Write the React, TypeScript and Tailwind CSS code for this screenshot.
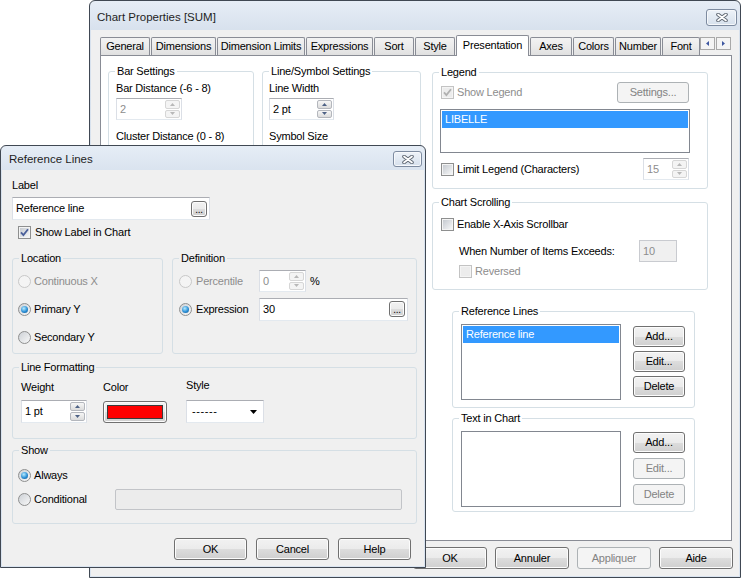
import React from 'react';

type P = { children?: React.ReactNode; className?: string };

const BTN = 'border-[#707070] bg-[linear-gradient(#f2f2f2,#ebebeb_50%,#dddddd_50%,#cfcfcf)] shadow-[inset_0_0_0_1px_#fcfcfc]';
const BTN_OFF = 'border-[#adb2b5] bg-[#f4f4f4] text-[#838383]';
const GRAY = 'text-[#8d8d8d]';
const FIELD = 'border border-[#abadb3] border-x-[#dbdfe6] border-b-[#e3e9ef] bg-white';

function Button({ children, className = '', disabled = false }: P & { disabled?: boolean }) {
  return (
    <div className={`flex shrink-0 items-center justify-center rounded-[3px] border ${disabled ? BTN_OFF : BTN} ${className}`}>
      {children}
    </div>
  );
}

function Group({ title, className = '', children, bg = 'bg-white' }: P & { title: string; bg?: string }) {
  return (
    <div className={`relative shrink-0 rounded-[3px] border border-[#d5dfe5] ${className}`}>
      <span className={`absolute -top-[7px] left-[6px] px-[2px] ${bg}`}>{title}</span>
      {children}
    </div>
  );
}

function Check({ checked = false, disabled = false }) {
  return (
    <span className={`relative h-[13px] w-[13px] shrink-0 border p-[1px] ${disabled ? 'border-[#c3c3c3] bg-[#f4f4f4]' : 'border-[#8e8f8f] bg-[#f4f4f4]'}`}>
      <span className={`block h-full w-full ${disabled ? 'bg-[#ececec]' : 'bg-[linear-gradient(135deg,#c6cad0,#f5f6f7)]'}`} />
      {checked && (
        <svg className="absolute left-0 top-0" width="11" height="11" viewBox="0 0 11 11">
          <path d="M2 5.3 L4.4 8 L9 2.2" fill="none" stroke={disabled ? '#b0b0b0' : '#4a5f9a'} strokeWidth="1.8" />
        </svg>
      )}
    </span>
  );
}

function Radio({ checked = false, disabled = false }) {
  return (
    <span className={`flex h-[13px] w-[13px] shrink-0 items-center justify-center rounded-full border ${disabled ? 'border-[#c8c8c8] bg-[#f4f4f4]' : 'border-[#8e8f8f] bg-[linear-gradient(135deg,#cdd1d6,#f8f8f8)]'}`}>
      {checked && <span className="h-[7px] w-[7px] rounded-full bg-[radial-gradient(circle_at_40%_35%,#b8ecff,#2b8fd6_55%,#0f4f86)]" />}
    </span>
  );
}

function Arrow({ up, color }: { up: boolean; color: string }) {
  return (
    <svg width="5" height="3" viewBox="0 0 5 3">
      <path d={up ? 'M0 3 L2.5 0 L5 3Z' : 'M0 0 L2.5 3 L5 0Z'} fill={color} />
    </svg>
  );
}

function Spin({ value, disabled = false, className = '' }: { value: string; disabled?: boolean; className?: string }) {
  return (
    <div className={`flex h-[22px] shrink-0 ${FIELD} ${className}`}>
      <span className={`flex flex-1 items-center pl-[3px] ${disabled ? GRAY : ''}`}>{value}</span>
      <div className="flex w-[16px] flex-col gap-[1px] py-[1px] pr-[1px]">
        {[true, false].map((up) => (
          <div
            key={String(up)}
            className={`flex flex-1 items-center justify-center rounded-[2px] border ${disabled ? 'border-[#d6d6d6] bg-[#f4f4f4]' : 'border-[#b4b7bd] bg-[linear-gradient(#f6f6f6,#dcdcdc)]'}`}
          >
            <Arrow up={up} color={disabled ? '#b8b8b8' : '#4d6185'} />
          </div>
        ))}
      </div>
    </div>
  );
}

function ListBox({ items = [], className = '' }: { items?: string[]; className?: string }) {
  return (
    <div className={`shrink-0 border border-[#828790] bg-white p-[1px] ${className}`}>
      {items.map((t) => (
        <div key={t} className="h-[17px] bg-[#3399ff] pl-[3px] leading-[17px] text-white">
          {t}
        </div>
      ))}
    </div>
  );
}

function Dots() {
  return <Button className="h-[16px] w-[16px] items-end pb-[1px] text-[10px] leading-[10px]">...</Button>;
}

function CloseBtn({ className = '' }) {
  return (
    <div className={`flex shrink-0 items-center justify-center rounded-[3px] border border-[#7d8ba0] bg-[linear-gradient(#eef3f9,#d6e0ec)] shadow-[inset_0_0_0_1px_#f6f8fb] ${className}`}>
      <svg width="12" height="9" viewBox="0 0 12 9">
        <path d="M2 1.5 L10 7.5 M10 1.5 L2 7.5" stroke="#5e6773" strokeWidth="3.6" strokeLinecap="round" />
        <path d="M2 1.5 L10 7.5 M10 1.5 L2 7.5" stroke="#ffffff" strokeWidth="1.7" strokeLinecap="round" />
      </svg>
    </div>
  );
}

const TABS: [string, number][] = [
  ['General', 50],
  ['Dimensions', 65],
  ['Dimension Limits', 88],
  ['Expressions', 67],
  ['Sort', 40],
  ['Style', 40],
  ['Presentation', 73],
  ['Axes', 42],
  ['Colors', 41],
  ['Number', 46],
  ['Font', 38],
];

const WINDOW = 'flex flex-col rounded-t-[6px] border border-[#404853] bg-[linear-gradient(#e6edf6,#d7e1ed_30px,#dae4f0)] px-[1px] pb-[1px]';

function ChartProperties() {
  return (
    <div className={`absolute left-[89px] top-0 h-[578px] w-[652px] ${WINDOW}`}>
      <div className="flex h-[29px] shrink-0 items-center pl-[6px] pr-[2px] pt-[3px]">
        <span className="text-[11.5px] tracking-normal text-[#1e1e1e]">Chart Properties [SUM]</span>
        <CloseBtn className="ml-auto h-[17px] w-[31px]" />
      </div>
      <div className="flex flex-1 flex-col bg-[#f0f0f0] pl-[9px] pr-[6px] pt-[5px]">
        {/* tab strip */}
        <div className="flex h-[21px] shrink-0 items-end">
          <div className="flex h-full w-[600px] items-end gap-[1px] overflow-hidden">
            {TABS.map(([name, w]) =>
              name === 'Presentation' ? (
                <div
                  key={name}
                  style={{ width: w }}
                  className="relative z-10 flex h-[21px] shrink-0 items-start justify-center rounded-t-[2px] border border-b-0 border-[#898c95] bg-white pt-[3px]"
                >
                  {name}
                </div>
              ) : (
                <div
                  key={name}
                  style={{ width: w }}
                  className="mb-[1px] flex h-[18px] shrink-0 items-center justify-center rounded-t-[2px] border border-b-0 border-[#898c95] bg-[linear-gradient(#f3f3f3,#ebebeb_50%,#e0e0e0)]"
                >
                  {name}
                </div>
              )
            )}
          </div>
          <div className="mt-[2px] flex gap-[1px] self-start">
            <div className="flex h-[13px] w-[15px] items-center justify-center border border-[#a9a9a9] bg-[#f4f4f4]">
              <svg width="3" height="5" viewBox="0 0 3 5"><path d="M3 0 L0 2.5 L3 5Z" fill="#3d56a0" /></svg>
            </div>
            <div className="flex h-[13px] w-[15px] items-center justify-center border border-[#a9a9a9] bg-[#f4f4f4]">
              <svg width="3" height="5" viewBox="0 0 3 5"><path d="M0 0 L3 2.5 L0 5Z" fill="#3d56a0" /></svg>
            </div>
          </div>
        </div>

        {/* panel */}
        <div className="-mt-[1px] flex h-[486px] w-[632px] shrink-0 border border-[#898c95] bg-white pl-[7px] pt-[15px]">
          <div className="flex w-[313px] flex-col">
            <div className="flex gap-[8px]">
              <Group title="Bar Settings" className="flex h-[150px] w-[146px] flex-col pl-[7px] pt-[10px]">
                <span>Bar Distance (-6 - 8)</span>
                <Spin value="2" disabled className="mt-[3px] w-[66px]" />
                <span className="mt-[10px]">Cluster Distance (0 - 8)</span>
                <Spin value="5" disabled className="mt-[3px] w-[66px]" />
              </Group>
              <Group title="Line/Symbol Settings" className="flex h-[150px] w-[159px] flex-col pl-[6px] pt-[10px]">
                <span>Line Width</span>
                <Spin value="2 pt" className="mt-[3px] w-[65px]" />
                <span className="mt-[10px]">Symbol Size</span>
                <Spin value="2 pt" className="mt-[3px] w-[65px]" />
              </Group>
            </div>
          </div>

          <div className="ml-[11px] mt-[1px] flex w-[276px] flex-col">
            <Group title="Legend" className="flex h-[117px] w-[276px] flex-col pl-[8px] pr-[18px] pt-[9px]">
              <div className="flex h-[21px] items-center">
                <Check checked disabled />
                <span className={`ml-[3px] ${GRAY}`}>Show Legend</span>
                <Button disabled className="ml-auto h-[21px] w-[72px]">Settings...</Button>
              </div>
              <ListBox items={['LIBELLE']} className="-ml-[1px] mt-[6px] h-[44px] w-[250px]" />
              <div className="mt-[5px] flex h-[22px] items-center">
                <Check />
                <span className="ml-[3px]">Limit Legend (Characters)</span>
                <Spin value="15" disabled className="ml-auto w-[46px]" />
              </div>
            </Group>

            <Group title="Chart Scrolling" className="mt-[13px] flex h-[88px] w-[276px] flex-col pl-[8px] pt-[15px]">
              <div className="flex h-[13px] items-center">
                <Check />
                <span className="ml-[3px]">Enable X-Axis Scrollbar</span>
              </div>
              <div className="mt-[9px] flex h-[22px] items-center pl-[18px]">
                <span className="w-[180px]">When Number of Items Exceeds:</span>
                <div className={`flex h-[22px] w-[38px] items-center border border-[#c9cbd0] bg-[#f0f0f0] pl-[3px] ${GRAY}`}>10</div>
              </div>
              <div className="mt-[3px] flex h-[13px] items-center pl-[18px]">
                <Check disabled />
                <span className={`ml-[3px] ${GRAY}`}>Reversed</span>
              </div>
            </Group>

            <Group title="Reference Lines" className="ml-[20px] mt-[21px] flex h-[97px] w-[243px] pl-[8px] pt-[12px]">
              <ListBox items={['Reference line']} className="h-[76px] w-[160px]" />
              <div className="ml-[12px] mt-[2px] flex flex-col gap-[4px]">
                <Button className="h-[21px] w-[52px]">Add...</Button>
                <Button className="h-[21px] w-[52px]">Edit...</Button>
                <Button className="h-[21px] w-[52px]">Delete</Button>
              </div>
            </Group>

            <Group title="Text in Chart" className="ml-[20px] mt-[10px] flex h-[94px] w-[243px] pl-[8px] pt-[12px]">
              <ListBox className="h-[76px] w-[160px]" />
              <div className="ml-[12px] mt-[1px] flex flex-col gap-[5px]">
                <Button className="h-[21px] w-[52px]">Add...</Button>
                <Button disabled className="h-[21px] w-[52px]">Edit...</Button>
                <Button disabled className="h-[21px] w-[52px]">Delete</Button>
              </div>
            </Group>
          </div>
        </div>

        <div className="mt-[6px] flex justify-end gap-[8px]">
          <Button className="h-[22px] w-[74px]">OK</Button>
          <Button className="h-[22px] w-[74px]">Annuler</Button>
          <Button disabled className="h-[22px] w-[74px]">Appliquer</Button>
          <Button className="h-[22px] w-[74px]">Aide</Button>
        </div>
      </div>
    </div>
  );
}

function ReferenceLines() {
  const BG = 'bg-[#f0f0f0]';
  return (
    <div className={`absolute left-0 top-[145px] h-[423px] w-[426px] ${WINDOW}`}>
      <div className="flex h-[24px] shrink-0 items-center pl-[7px] pr-[2px] pt-[2px]">
        <span className="text-[11.5px] tracking-normal text-[#1e1e1e]">Reference Lines</span>
        <CloseBtn className="ml-auto h-[16px] w-[29px]" />
      </div>
      <div className="flex flex-1 flex-col bg-[#f0f0f0] pl-[10px] pt-[9px]">
        <span>Label</span>
        <div className={`mt-[5px] flex h-[23px] w-[198px] items-center pl-[3px] pr-[2px] ${FIELD}`}>
          <span className="flex-1">Reference line</span>
          <Dots />
        </div>
        <div className="ml-[6px] mt-[6px] flex h-[13px] items-center">
          <Check checked />
          <span className="ml-[4px]">Show Label in Chart</span>
        </div>

        <div className="mt-[19px] flex">
          <Group bg={BG} title="Location" className="flex h-[96px] w-[151px] flex-col gap-[14px] pl-[5px] pt-[15px]">
            <div className="flex h-[14px] items-center">
              <Radio disabled />
              <span className={`ml-[3px] ${GRAY}`}>Continuous X</span>
            </div>
            <div className="flex h-[14px] items-center">
              <Radio checked />
              <span className="ml-[3px]">Primary Y</span>
            </div>
            <div className="flex h-[14px] items-center">
              <Radio />
              <span className="ml-[3px]">Secondary Y</span>
            </div>
          </Group>
          <Group bg={BG} title="Definition" className="ml-[9px] flex h-[96px] w-[245px] flex-col gap-[6px] pl-[6px] pt-[11px]">
            <div className="flex h-[22px] items-center">
              <div className="flex w-[80px] items-center">
                <Radio disabled />
                <span className={`ml-[4px] ${GRAY}`}>Percentile</span>
              </div>
              <Spin value="0" disabled className="w-[47px]" />
              <span className="ml-[4px]">%</span>
            </div>
            <div className="flex h-[22px] items-center">
              <div className="flex w-[80px] items-center">
                <Radio checked />
                <span className="ml-[4px]">Expression</span>
              </div>
              <div className={`flex h-[23px] w-[149px] items-center pl-[3px] pr-[2px] ${FIELD}`}>
                <span className="flex-1">30</span>
                <Dots />
              </div>
            </div>
          </Group>
        </div>

        <Group bg={BG} title="Line Formatting" className="mt-[13px] flex h-[72px] w-[405px] pl-[8px] pt-[13px]">
          <div className="flex w-[66px] flex-col">
            <span>Weight</span>
            <Spin value="1 pt" className="mt-[6px] h-[23px] w-[66px]" />
          </div>
          <div className="ml-[16px] flex w-[64px] flex-col">
            <span>Color</span>
            <div className={`mt-[7px] flex h-[22px] w-[64px] rounded-[3px] border p-[3px] ${BTN}`}>
              <div className="flex-1 border border-[#3a3a3a] bg-[#ff0000]" />
            </div>
          </div>
          <div className="ml-[19px] flex w-[78px] flex-col">
            <span className="-mt-[2px]">Style</span>
            <div className={`mt-[8px] flex h-[23px] w-[78px] items-center pl-[5px] pr-[6px] ${FIELD}`}>
              <span className="flex-1 tracking-[0.6px]">------</span>
              <svg width="7" height="4" viewBox="0 0 7 4"><path d="M0 0 L3.5 4 L7 0Z" fill="#000" /></svg>
            </div>
          </div>
        </Group>

        <Group bg={BG} title="Show" className="mt-[11px] flex h-[74px] w-[405px] flex-col pl-[5px] pt-[17px]">
          <div className="flex h-[14px] items-center">
            <Radio checked />
            <span className="ml-[3px]">Always</span>
          </div>
          <div className="mt-[6px] flex h-[22px] items-center">
            <div className="flex w-[97px] items-center">
              <Radio />
              <span className="ml-[3px]">Conditional</span>
            </div>
            <div className="h-[21px] w-[287px] rounded-[2px] border border-[#c2c4c8] bg-[#ececec]" />
          </div>
        </Group>

        <div className="mr-[13px] mt-[14px] flex justify-end gap-[9px]">
          <Button className="h-[22px] w-[73px]">OK</Button>
          <Button className="h-[22px] w-[73px]">Cancel</Button>
          <Button className="h-[22px] w-[73px]">Help</Button>
        </div>
      </div>
    </div>
  );
}

export default function App() {
  return (
    <div className="relative h-[584px] w-[746px] overflow-hidden bg-white font-['Liberation_Sans',Arial,sans-serif] text-[11px] leading-[13px] tracking-[-0.2px] text-black">
      <ChartProperties />
      <ReferenceLines />
    </div>
  );
}
